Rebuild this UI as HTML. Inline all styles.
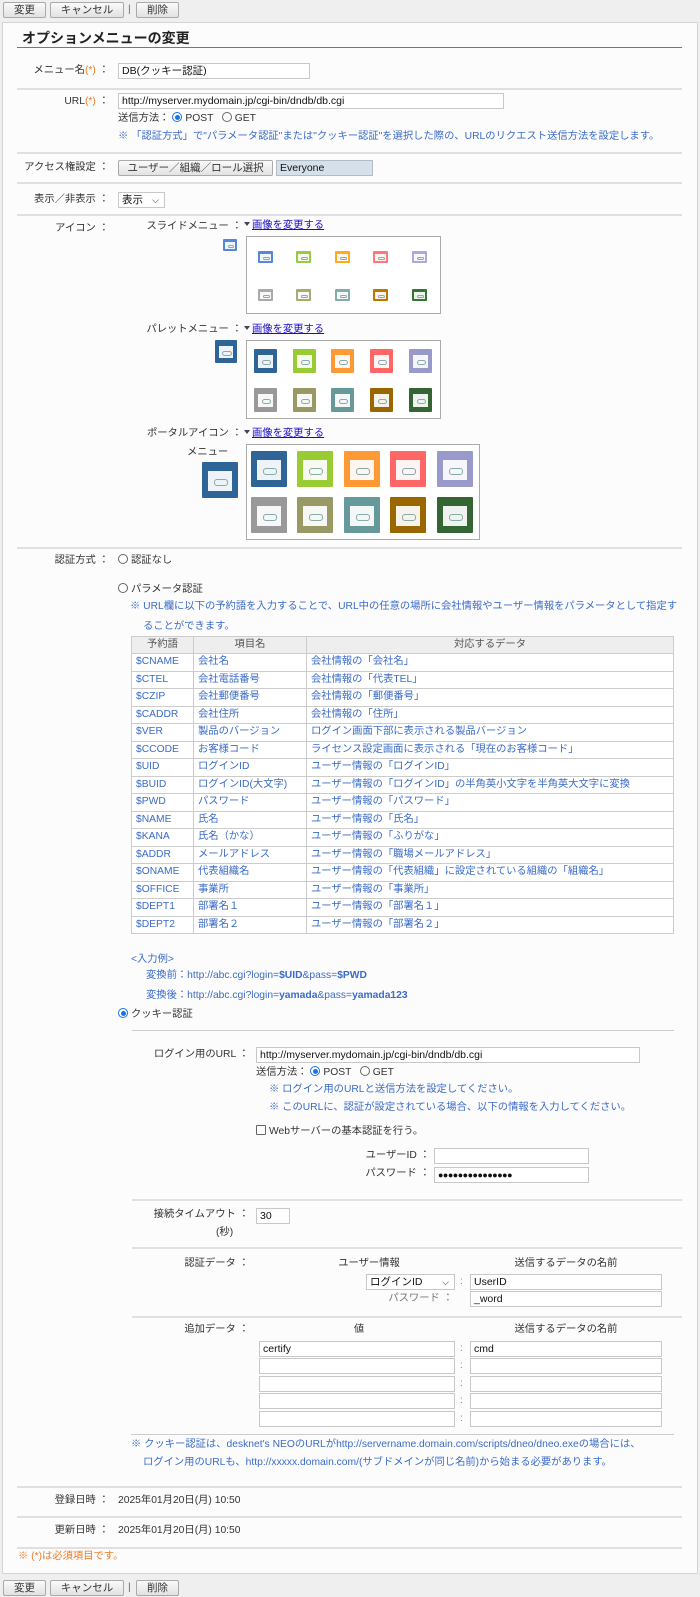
<!DOCTYPE html>
<html><head><meta charset="utf-8">
<style>
*{box-sizing:border-box;margin:0;padding:0}
body{width:700px;height:1597px;background:#efefef;font-family:"Liberation Sans","Noto Sans CJK JP",sans-serif;font-size:10.3px;color:#333;position:relative;overflow:hidden}
.a{position:absolute;white-space:nowrap;line-height:14px}
.btn{position:absolute;height:16px;border:1px solid #aaa;border-radius:2px;background:linear-gradient(#fafafa,#e2e2e2);font-size:10.5px;line-height:14px;text-align:center;color:#333}
.panel{position:absolute;left:2px;top:22px;width:696px;height:1552px;background:#fcfcfc;border:1px solid #d4d4d4}
.sep{position:absolute;height:2px;background:#e0e0e0}
.inp{position:absolute;height:16px;border:1px solid #c8c8c8;background:#fff;line-height:14px;padding-left:3px;font-size:10.5px;color:#111;white-space:nowrap;overflow:hidden}
.r{text-align:right}
.o{color:#f07a20}
.b{color:#3a6bc8}
.rad{display:inline-block;width:10px;height:10px;border:1px solid #666;border-radius:50%;vertical-align:-1px;margin-right:3px;background:#fff;position:relative}
.rad.on{border-color:#1a73e8}
.rad.on::after{content:"";position:absolute;left:1.5px;top:1.5px;width:5px;height:5px;border-radius:50%;background:#1a73e8}
.box{position:absolute;border:1px solid #aaa;background:#fff}
.ic{position:absolute;border-radius:1px}
.ic::after{content:"";position:absolute;left:16%;top:26%;width:68%;height:54%;background:#fff;opacity:.92}
.ic::before{content:"";position:absolute;left:34%;top:46%;width:32%;height:14%;border:1px solid #8aa;border-radius:3px;z-index:2}
.lk{color:#1a0dcc;text-decoration:underline}
.tri{display:inline-block;width:0;height:0;border-left:3px solid transparent;border-right:3px solid transparent;border-top:4px solid #445;margin-right:2px;vertical-align:2px}
table{position:absolute;border-collapse:collapse;left:131px;top:636px;width:543px;font-size:10.3px;color:#3a6bc8}
td,th{box-sizing:content-box;border:1px solid #ccc;height:16.5px;padding:0 4px;line-height:14px;background:#fff;white-space:nowrap;font-weight:normal}
th{background:#eee;color:#555;text-align:center;height:16px}
</style></head><body>

<div class="btn" style="left:3px;top:2px;width:43px">変更</div>
<div class="btn" style="left:50px;top:2px;width:74px">キャンセル</div>
<div class="a" style="left:128px;top:3px;color:#666">|</div>
<div class="btn" style="left:136px;top:2px;width:43px">削除</div>

<div class="panel"></div>
<div class="a" style="left:22px;top:30px;font-size:14px;font-weight:bold;line-height:16px;color:#222">オプションメニューの変更</div>
<div class="sep" style="left:17px;top:47px;width:665px;height:1px;background:#777"></div>

<div class="a r" style="right:591px;top:64px">メニュー名<span class="o">(*)</span> ：</div>
<div class="inp" style="left:118px;top:63px;width:192px">DB(クッキー認証)</div>
<div class="sep" style="left:17px;top:88px;width:665px"></div>

<div class="a r" style="right:591px;top:95px">URL<span class="o">(*)</span> ：</div>
<div class="inp" style="left:118px;top:93px;width:386px">http://myserver.mydomain.jp/cgi-bin/dndb/db.cgi</div>
<div class="a" style="left:118px;top:112px">送信方法： <span class="rad on"></span>POST &nbsp; <span class="rad"></span>GET</div>
<div class="a b" style="left:118px;top:130px">※ 「認証方式」で"パラメータ認証"または"クッキー認証"を選択した際の、URLのリクエスト送信方法を設定します。</div>
<div class="sep" style="left:17px;top:152px;width:665px"></div>

<div class="a r" style="right:591px;top:161px">アクセス権設定 ：</div>
<div class="btn" style="left:118px;top:160px;width:155px">ユーザー／組織／ロール選択</div>
<div class="inp" style="left:276px;top:160px;width:97px;background:#d6e0ea;border-color:#b0bcc8">Everyone</div>
<div class="sep" style="left:17px;top:182px;width:665px"></div>

<div class="a r" style="right:591px;top:193px">表示／非表示 ：</div>
<div class="inp" style="left:118px;top:192px;width:47px">表示 <span style="position:absolute;right:5px;font-size:9px">&#x2335;</span></div>
<div class="sep" style="left:17px;top:214px;width:665px"></div>

<div class="a r" style="right:591px;top:222px">アイコン ：</div>
<div class="a r" style="right:458px;top:220px">スライドメニュー ：</div>
<div class="a" style="left:244px;top:219px"><span class="tri"></span><span class="lk">画像を変更する</span></div>
<div class="ic" style="left:223px;top:239px;width:14px;height:12px;background:#5588dd"></div>
<div class="box" style="left:246px;top:236px;width:195px;height:78px"></div>
<div class="ic" style="left:258px;top:251px;width:15px;height:12px;background:#5588dd"></div>
<div class="ic" style="left:296px;top:251px;width:15px;height:12px;background:#99cc44"></div>
<div class="ic" style="left:335px;top:251px;width:15px;height:12px;background:#ffaa22"></div>
<div class="ic" style="left:373px;top:251px;width:15px;height:12px;background:#ff7777"></div>
<div class="ic" style="left:412px;top:251px;width:15px;height:12px;background:#aaaadd"></div>
<div class="ic" style="left:258px;top:289px;width:15px;height:12px;background:#aaaaaa"></div>
<div class="ic" style="left:296px;top:289px;width:15px;height:12px;background:#aaaa77"></div>
<div class="ic" style="left:335px;top:289px;width:15px;height:12px;background:#88aaaa"></div>
<div class="ic" style="left:373px;top:289px;width:15px;height:12px;background:#bb7700"></div>
<div class="ic" style="left:412px;top:289px;width:15px;height:12px;background:#337733"></div>

<div class="a r" style="right:458px;top:323px">パレットメニュー ：</div>
<div class="a" style="left:244px;top:323px"><span class="tri"></span><span class="lk">画像を変更する</span></div>
<div class="ic" style="left:215px;top:340px;width:22px;height:23px;background:#2f6496"></div>
<div class="box" style="left:246px;top:340px;width:195px;height:79px"></div>
<div class="ic" style="left:254px;top:349px;width:23px;height:24px;background:#2f6496"></div>
<div class="ic" style="left:293px;top:349px;width:23px;height:24px;background:#99cc33"></div>
<div class="ic" style="left:331px;top:349px;width:23px;height:24px;background:#ff9933"></div>
<div class="ic" style="left:370px;top:349px;width:23px;height:24px;background:#ff6666"></div>
<div class="ic" style="left:409px;top:349px;width:23px;height:24px;background:#9999cc"></div>
<div class="ic" style="left:254px;top:388px;width:23px;height:24px;background:#999999"></div>
<div class="ic" style="left:293px;top:388px;width:23px;height:24px;background:#999966"></div>
<div class="ic" style="left:331px;top:388px;width:23px;height:24px;background:#669999"></div>
<div class="ic" style="left:370px;top:388px;width:23px;height:24px;background:#996600"></div>
<div class="ic" style="left:409px;top:388px;width:23px;height:24px;background:#336633"></div>

<div class="a r" style="right:458px;top:427px">ポータルアイコン ：</div>
<div class="a" style="left:244px;top:427px"><span class="tri"></span><span class="lk">画像を変更する</span></div>
<div class="a" style="left:187px;top:446px">メニュー</div>
<div class="ic" style="left:202px;top:462px;width:36px;height:36px;background:#2f6496"></div>
<div class="box" style="left:246px;top:444px;width:234px;height:96px"></div>
<div class="ic" style="left:251px;top:451px;width:36px;height:36px;background:#2f6496"></div>
<div class="ic" style="left:297px;top:451px;width:36px;height:36px;background:#99cc33"></div>
<div class="ic" style="left:344px;top:451px;width:36px;height:36px;background:#ff9933"></div>
<div class="ic" style="left:390px;top:451px;width:36px;height:36px;background:#ff6666"></div>
<div class="ic" style="left:437px;top:451px;width:36px;height:36px;background:#9999cc"></div>
<div class="ic" style="left:251px;top:497px;width:36px;height:36px;background:#999999"></div>
<div class="ic" style="left:297px;top:497px;width:36px;height:36px;background:#999966"></div>
<div class="ic" style="left:344px;top:497px;width:36px;height:36px;background:#669999"></div>
<div class="ic" style="left:390px;top:497px;width:36px;height:36px;background:#996600"></div>
<div class="ic" style="left:437px;top:497px;width:36px;height:36px;background:#336633"></div>
<div class="sep" style="left:17px;top:547px;width:665px"></div>

<div class="a r" style="right:591px;top:554px">認証方式 ：</div>
<div class="a" style="left:118px;top:554px"><span class="rad"></span>認証なし</div>
<div class="a" style="left:118px;top:583px"><span class="rad"></span>パラメータ認証</div>
<div class="a b" style="left:130px;top:600px">※ URL欄に以下の予約語を入力することで、URL中の任意の場所に会社情報やユーザー情報をパラメータとして指定す</div>
<div class="a b" style="left:143px;top:620px">ることができます。</div>
<table>
<tr><th style="width:53px">予約語</th><th style="width:104px">項目名</th><th>対応するデータ</th></tr>
<tr><td>$CNAME</td><td>会社名</td><td>会社情報の「会社名」</td></tr>
<tr><td>$CTEL</td><td>会社電話番号</td><td>会社情報の「代表TEL」</td></tr>
<tr><td>$CZIP</td><td>会社郵便番号</td><td>会社情報の「郵便番号」</td></tr>
<tr><td>$CADDR</td><td>会社住所</td><td>会社情報の「住所」</td></tr>
<tr><td>$VER</td><td>製品のバージョン</td><td>ログイン画面下部に表示される製品バージョン</td></tr>
<tr><td>$CCODE</td><td>お客様コード</td><td>ライセンス設定画面に表示される「現在のお客様コード」</td></tr>
<tr><td>$UID</td><td>ログインID</td><td>ユーザー情報の「ログインID」</td></tr>
<tr><td>$BUID</td><td>ログインID(大文字)</td><td>ユーザー情報の「ログインID」の半角英小文字を半角英大文字に変換</td></tr>
<tr><td>$PWD</td><td>パスワード</td><td>ユーザー情報の「パスワード」</td></tr>
<tr><td>$NAME</td><td>氏名</td><td>ユーザー情報の「氏名」</td></tr>
<tr><td>$KANA</td><td>氏名（かな）</td><td>ユーザー情報の「ふりがな」</td></tr>
<tr><td>$ADDR</td><td>メールアドレス</td><td>ユーザー情報の「職場メールアドレス」</td></tr>
<tr><td>$ONAME</td><td>代表組織名</td><td>ユーザー情報の「代表組織」に設定されている組織の「組織名」</td></tr>
<tr><td>$OFFICE</td><td>事業所</td><td>ユーザー情報の「事業所」</td></tr>
<tr><td>$DEPT1</td><td>部署名１</td><td>ユーザー情報の「部署名１」</td></tr>
<tr><td>$DEPT2</td><td>部署名２</td><td>ユーザー情報の「部署名２」</td></tr>
</table>
<div class="a b" style="left:131px;top:953px">&lt;入力例&gt;</div>
<div class="a b" style="left:146px;top:969px">変換前：http://abc.cgi?login=<b>$UID</b>&amp;pass=<b>$PWD</b></div>
<div class="a b" style="left:146px;top:989px">変換後：http://abc.cgi?login=<b>yamada</b>&amp;pass=<b>yamada123</b></div>
<div class="a" style="left:118px;top:1008px"><span class="rad on"></span>クッキー認証</div>
<div class="sep" style="left:132px;top:1030px;width:542px;height:1px;background:#ccc"></div>

<div class="a r" style="right:451px;top:1048px">ログイン用のURL ：</div>
<div class="inp" style="left:256px;top:1047px;width:384px">http://myserver.mydomain.jp/cgi-bin/dndb/db.cgi</div>
<div class="a" style="left:256px;top:1066px">送信方法： <span class="rad on"></span>POST &nbsp; <span class="rad"></span>GET</div>
<div class="a b" style="left:269px;top:1083px">※ ログイン用のURLと送信方法を設定してください。</div>
<div class="a b" style="left:269px;top:1101px">※ このURLに、認証が設定されている場合、以下の情報を入力してください。</div>
<div class="a" style="left:256px;top:1125px"><span class="rad" style="border-radius:1px"></span>Webサーバーの基本認証を行う。</div>
<div class="a r" style="right:270px;top:1149px">ユーザーID ：</div>
<div class="inp" style="left:434px;top:1148px;width:155px"></div>
<div class="a r" style="right:270px;top:1167px">パスワード ：</div>
<div class="inp" style="left:434px;top:1167px;width:155px;font-size:9px;letter-spacing:-.5px">●●●●●●●●●●●●●●●</div>
<div class="sep" style="left:132px;top:1199px;width:550px"></div>

<div class="a r" style="right:451px;top:1208px">接続タイムアウト ：</div>
<div class="inp" style="left:256px;top:1208px;width:34px">30</div>
<div class="a" style="left:216px;top:1226px">(秒)</div>
<div class="sep" style="left:132px;top:1247px;width:550px"></div>

<div class="a r" style="right:451px;top:1257px">認証データ ：</div>
<div class="a" style="left:369px;top:1257px;transform:translateX(-50%)">ユーザー情報</div>
<div class="a" style="left:566px;top:1257px;transform:translateX(-50%)">送信するデータの名前</div>
<div class="inp" style="left:366px;top:1274px;width:89px">ログインID <span style="position:absolute;right:5px;font-size:9px">&#x2335;</span></div>
<div class="a" style="left:460px;top:1275px;color:#888">:</div>
<div class="inp" style="left:470px;top:1274px;width:192px">UserID</div>
<div class="a r" style="right:247px;top:1292px;color:#777">パスワード ：</div>
<div class="inp" style="left:470px;top:1291px;width:192px">_word</div>
<div class="sep" style="left:132px;top:1316px;width:550px"></div>

<div class="a r" style="right:451px;top:1323px">追加データ ：</div>
<div class="a" style="left:359px;top:1323px;transform:translateX(-50%)">値</div>
<div class="a" style="left:566px;top:1323px;transform:translateX(-50%)">送信するデータの名前</div>
<div class="inp" style="left:259px;top:1341px;width:196px">certify</div><div class="a" style="left:460px;top:1342px;color:#888">:</div><div class="inp" style="left:470px;top:1341px;width:192px">cmd</div>
<div class="inp" style="left:259px;top:1358px;width:196px"></div><div class="a" style="left:460px;top:1359px;color:#888">:</div><div class="inp" style="left:470px;top:1358px;width:192px"></div>
<div class="inp" style="left:259px;top:1376px;width:196px"></div><div class="a" style="left:460px;top:1377px;color:#888">:</div><div class="inp" style="left:470px;top:1376px;width:192px"></div>
<div class="inp" style="left:259px;top:1393px;width:196px"></div><div class="a" style="left:460px;top:1394px;color:#888">:</div><div class="inp" style="left:470px;top:1393px;width:192px"></div>
<div class="inp" style="left:259px;top:1411px;width:196px"></div><div class="a" style="left:460px;top:1412px;color:#888">:</div><div class="inp" style="left:470px;top:1411px;width:192px"></div>
<div class="sep" style="left:131px;top:1434px;width:543px;height:1px;background:#ccc"></div>
<div class="a b" style="left:131px;top:1438px">※ クッキー認証は、desknet's NEOのURLがhttp://servername.domain.com/scripts/dneo/dneo.exeの場合には、</div>
<div class="a b" style="left:143px;top:1456px">ログイン用のURLも、http://xxxxx.domain.com/(サブドメインが同じ名前)から始まる必要があります。</div>
<div class="sep" style="left:17px;top:1486px;width:665px"></div>

<div class="a r" style="right:591px;top:1494px">登録日時 ：</div>
<div class="a" style="left:118px;top:1494px">2025年01月20日(月) 10:50</div>
<div class="sep" style="left:17px;top:1516px;width:665px"></div>
<div class="a r" style="right:591px;top:1524px">更新日時 ：</div>
<div class="a" style="left:118px;top:1524px">2025年01月20日(月) 10:50</div>
<div class="sep" style="left:17px;top:1547px;width:665px"></div>
<div class="a o" style="left:18px;top:1550px">※ (*)は必須項目です。</div>

<div class="btn" style="left:3px;top:1580px;width:43px">変更</div>
<div class="btn" style="left:50px;top:1580px;width:74px">キャンセル</div>
<div class="a" style="left:128px;top:1581px;color:#666">|</div>
<div class="btn" style="left:136px;top:1580px;width:43px">削除</div>
</body></html>
